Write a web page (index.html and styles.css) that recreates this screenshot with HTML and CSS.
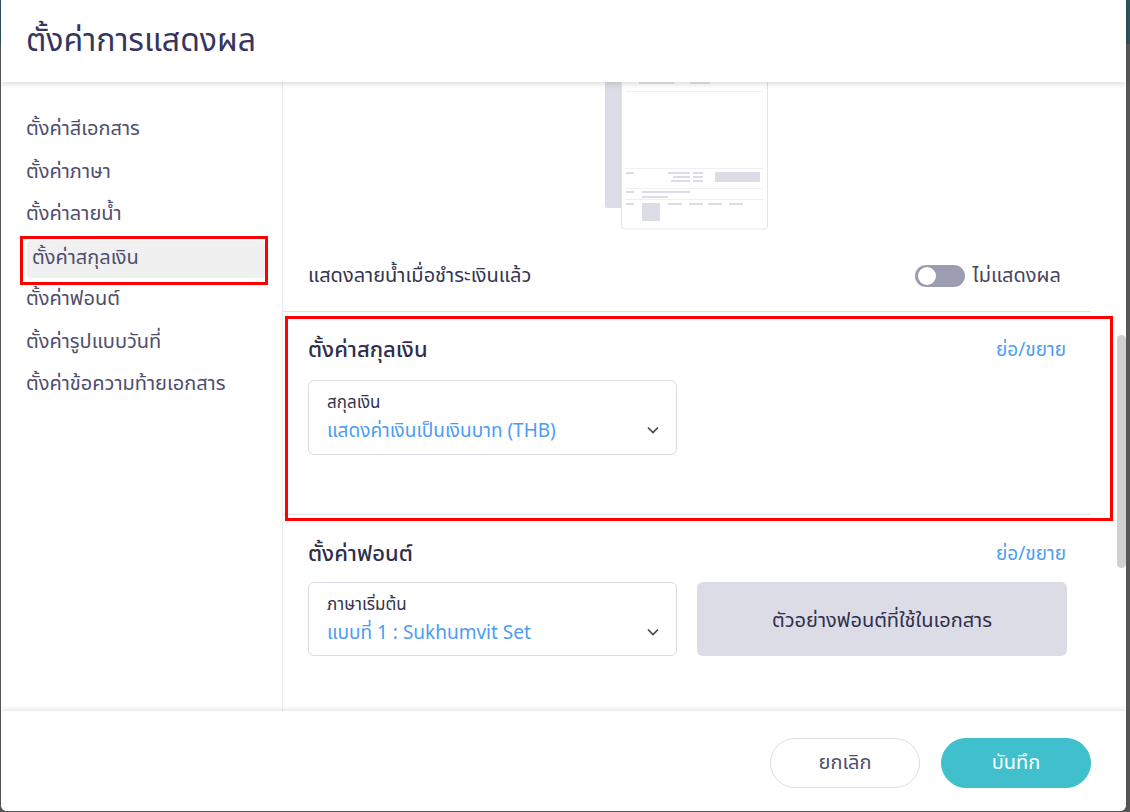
FILE: index.html
```html
<!doctype html>
<html>
    <head>
        <title>ตั้งค่าการแสดงผล</title>
        <link rel="stylesheet" href="styles.css">
    </head>
    <body>
        <div class="modal">
            <div class="modal-head">
                <h1>ตั้งค่าการแสดงผล</h1>
            </div>
            <div class="modal-body">
                <ul class="side">
                    <li>ตั้งค่าสีเอกสาร</li>
                    <li>ตั้งค่าภาษา</li>
                    <li>ตั้งค่าลายน้ำ</li>
                    <li class="active">ตั้งค่าสกุลเงิน</li>
                    <li>ตั้งค่าฟอนต์</li>
                    <li>ตั้งค่ารูปแบบวันที่</li>
                    <li>ตั้งค่าข้อความท้ายเอกสาร</li>
                </ul>
                <div class="content">
                    <div class="sections">
                        <!-- watermark preview -->
                        <div class="preview">
                            <svg width="164" height="152" viewBox="0 0 164 152">
                                <rect x="0" y="0" width="18" height="129" rx="2" fill="#dcdce6"/>
                                <rect x="16.5" y="-8" width="146" height="158" rx="3" fill="#fff" stroke="#e3e3ee"/>
                                <rect x="34" y="3" width="35" height="2" fill="#e4e4ec"/>
                                <rect x="85" y="3" width="20" height="2" fill="#e4e4ec"/>
                                <line x1="21" y1="12.5" x2="158" y2="12.5" stroke="#efeff5"/>
                                <line x1="21" y1="89.5" x2="158" y2="89.5" stroke="#efeff5"/>
                                <rect x="21" y="93" width="8" height="2" fill="#dcdce6"/>
                                <rect x="63" y="93" width="22" height="2" fill="#dcdce6"/>
                                <rect x="88" y="93" width="10" height="2" fill="#dcdce6"/>
                                <rect x="68" y="97" width="17" height="2" fill="#dcdce6"/>
                                <rect x="88" y="97" width="10" height="2" fill="#dcdce6"/>
                                <rect x="66" y="101" width="19" height="2" fill="#dcdce6"/>
                                <rect x="88" y="101" width="10" height="2" fill="#dcdce6"/>
                                <rect x="110" y="93" width="45" height="10" rx="1" fill="#dcdce6"/>
                                <line x1="21" y1="109.5" x2="158" y2="109.5" stroke="#efeff5"/>
                                <rect x="21" y="112" width="8" height="2" fill="#dcdce6"/>
                                <rect x="37" y="112" width="48" height="2" fill="#dcdce6"/>
                                <rect x="37" y="117" width="26" height="2" fill="#dcdce6"/>
                                <line x1="21" y1="120.5" x2="158" y2="120.5" stroke="#efeff5"/>
                                <rect x="21" y="124" width="8" height="2" fill="#dcdce6"/>
                                <rect x="37" y="124" width="18" height="18" fill="#dcdce6"/>
                                <rect x="63" y="124" width="14" height="2" fill="#dcdce6"/>
                                <rect x="84" y="124" width="14" height="2" fill="#dcdce6"/>
                                <rect x="103" y="124" width="14" height="2" fill="#dcdce6"/>
                                <rect x="124" y="124" width="14" height="2" fill="#dcdce6"/>
                            </svg>
                        </div>

                        <div class="row-toggle">
                            <span>แสดงลายน้ำเมื่อชำระเงินแล้ว</span>
                            <label class="switch">
                                <span class="track"><span class="knob"></span></span>
                                <span class="switch-text">ไม่แสดงผล</span>
                            </label>
                        </div>

                        <div class="section">
                            <div class="section-head">
                                <h2>ตั้งค่าสกุลเงิน</h2>
                                <a href="#">ย่อ/ขยาย</a>
                            </div>
                            <div class="fields">
                                <div class="select">
                                    <div class="select-label">สกุลเงิน</div>
                                    <div class="select-value">แสดงค่าเงินเป็นเงินบาท (THB)</div>
                                    <svg class="chev" width="12" height="8" viewBox="0 0 12 8"><path d="M1 1.5l5 5 5-5" fill="none" stroke="#444" stroke-width="1.6"/></svg>
                                </div>
                            </div>
                        </div>

                        <div class="section">
                            <div class="section-head">
                                <h2>ตั้งค่าฟอนต์</h2>
                                <a href="#">ย่อ/ขยาย</a>
                            </div>
                            <div class="fields">
                                <div class="select">
                                    <div class="select-label">ภาษาเริ่มต้น</div>
                                    <div class="select-value">แบบที่ 1 : Sukhumvit Set</div>
                                    <svg class="chev" width="12" height="8" viewBox="0 0 12 8"><path d="M1 1.5l5 5 5-5" fill="none" stroke="#444" stroke-width="1.6"/></svg>
                                </div>
                                <div class="font-sample">ตัวอย่างฟอนต์ที่ใช้ในเอกสาร</div>
                            </div>
                        </div>
                    </div>
                    <div class="scrollbar"></div>
                </div>
            </div>
            <div class="modal-foot">
                <button class="btn">ยกเลิก</button>
                <button class="btn primary">บันทึก</button>
            </div>
        </div>

        <!-- highlight marks -->
        <div class="mark mark-side"></div>
        <div class="mark mark-currency"></div>
    </body>
</html>
```

FILE: styles.css
```css
* { margin: 0; padding: 0; box-sizing: border-box; }

body {
    width: 1130px;
    height: 812px;
    overflow: hidden;
    font-family: "Noto Sans Thai", "Sukhumvit Set", "Noto Sans", sans-serif;
    background: linear-gradient(to bottom, #2c5360 0, #2c5360 44px, #575757 44px);
    position: relative;
}

.modal {
    margin-left: 1px;
    width: 1125px;
    height: 811px;
    background: #fff;
    border-radius: 0 0 6px 6px;
    display: flex;
    flex-direction: column;
}

.modal-head {
    height: 82px;
    padding-left: 25px;
    display: flex;
    align-items: center;
    position: relative;
    z-index: 2;
    background: #fff;
    box-shadow: 0 2px 6px rgba(0,0,0,.14);
}

.modal-head h1 {
    font-size: 32px;
    font-weight: 400;
    color: #35355f;
}

.modal-body {
    flex: 1;
    display: flex;
    min-height: 0;
}

.side {
    width: 282px;
    border-right: 1px solid #ececf0;
    list-style: none;
    padding: 28px 14px 0 20px;
}

.side li {
    height: 42.5px;
    line-height: 38px;
    padding-left: 5px;
    font-size: 20px;
    color: #4e4e6c;
}

.side li.active {
    background: #f0f0f0;
    border-radius: 4px;
    margin: 3px 3px 2.5px 6px;
    padding-left: 5px;
    height: 37px;
    line-height: 34px;
}

.content {
    flex: 1;
    position: relative;
    overflow: hidden;
}

.sections {
    width: 808px;
}

.preview {
    height: 149px;
    display: flex;
    justify-content: center;
    align-items: flex-end;
    overflow: hidden;
}

.preview svg { display: block; }

.row-toggle {
    padding: 30px 30px 20px 25px;
    height: 81px;
    border-bottom: 1px solid #e2e2e6;
    display: flex;
    align-items: center;
    justify-content: space-between;
    font-size: 20px;
    color: #34344e;
}

.switch {
    display: flex;
    align-items: center;
    gap: 8px;
}

.track {
    width: 50px;
    height: 22px;
    border-radius: 11px;
    background: #9d9db2;
    position: relative;
}

.knob {
    position: absolute;
    left: 3px;
    top: 2px;
    width: 18px;
    height: 18px;
    border-radius: 50%;
    background: #fff;
}

.switch-text {
    font-size: 20px;
    color: #45455f;
}

.section {
    padding: 23px 25px 59px;
    border-bottom: 1px solid #e2e2e6;
}

.section + .section {
    padding-top: 24px;
    border-bottom: none;
}

.section-head {
    height: 30px;
    display: flex;
    align-items: center;
    justify-content: space-between;
    margin-bottom: 15px;
}

.section + .section .section-head { margin-bottom: 13px; }

.section-head h2 {
    font-size: 22px;
    font-weight: 500;
    color: #2f2f4d;
}

.section-head a {
    font-size: 19px;
    color: #4d9df5;
    text-decoration: none;
}

.fields {
    display: grid;
    grid-template-columns: 369px 370px;
    gap: 20px;
}

.select {
    height: 75px;
    border: 1px solid #dcdce8;
    border-radius: 6px;
    padding: 11px 18px 0;
    position: relative;
}

.section + .section .select { height: 74px; }

.select-label {
    font-size: 17px;
    line-height: 22px;
    color: #33334a;
}

.select-value {
    margin-top: 3px;
    font-size: 19px;
    line-height: 30px;
    color: #4b9cf4;
}

.chev {
    position: absolute;
    right: 17px;
    top: 45px;
}

.font-sample {
    height: 74px;
    border-radius: 6px;
    background: #dcdce6;
    display: flex;
    align-items: center;
    justify-content: center;
    padding-top: 3px;
    font-size: 20px;
    color: #2f2f4d;
}

.scrollbar {
    position: absolute;
    left: 834px;
    top: 253px;
    width: 9px;
    height: 233px;
    border-radius: 5px;
    background: #d0d0d0;
}

.modal-foot {
    height: 100px;
    position: relative;
    z-index: 2;
    background: #fff;
    border-radius: 0 0 6px 6px;
    box-shadow: 0 -2px 5px rgba(0,0,0,.1);
    display: flex;
    align-items: center;
    justify-content: flex-end;
    gap: 21px;
    padding: 4px 35px 0 0;
}

.btn {
    width: 150px;
    height: 50px;
    border-radius: 25px;
    border: 1px solid #dcdce8;
    background: #fff;
    font-family: inherit;
    font-size: 20px;
    color: #4e4e6c;
}

.btn.primary {
    border-color: #3fc0cc;
    background: #3fc0cc;
    color: #fff;
}

.mark {
    position: absolute;
    border: 3px solid #ff0000;
}

.mark-side {
    left: 20px;
    top: 236px;
    width: 248px;
    height: 49px;
}

.mark-currency {
    left: 285px;
    top: 316px;
    width: 828px;
    height: 205px;
}
```
